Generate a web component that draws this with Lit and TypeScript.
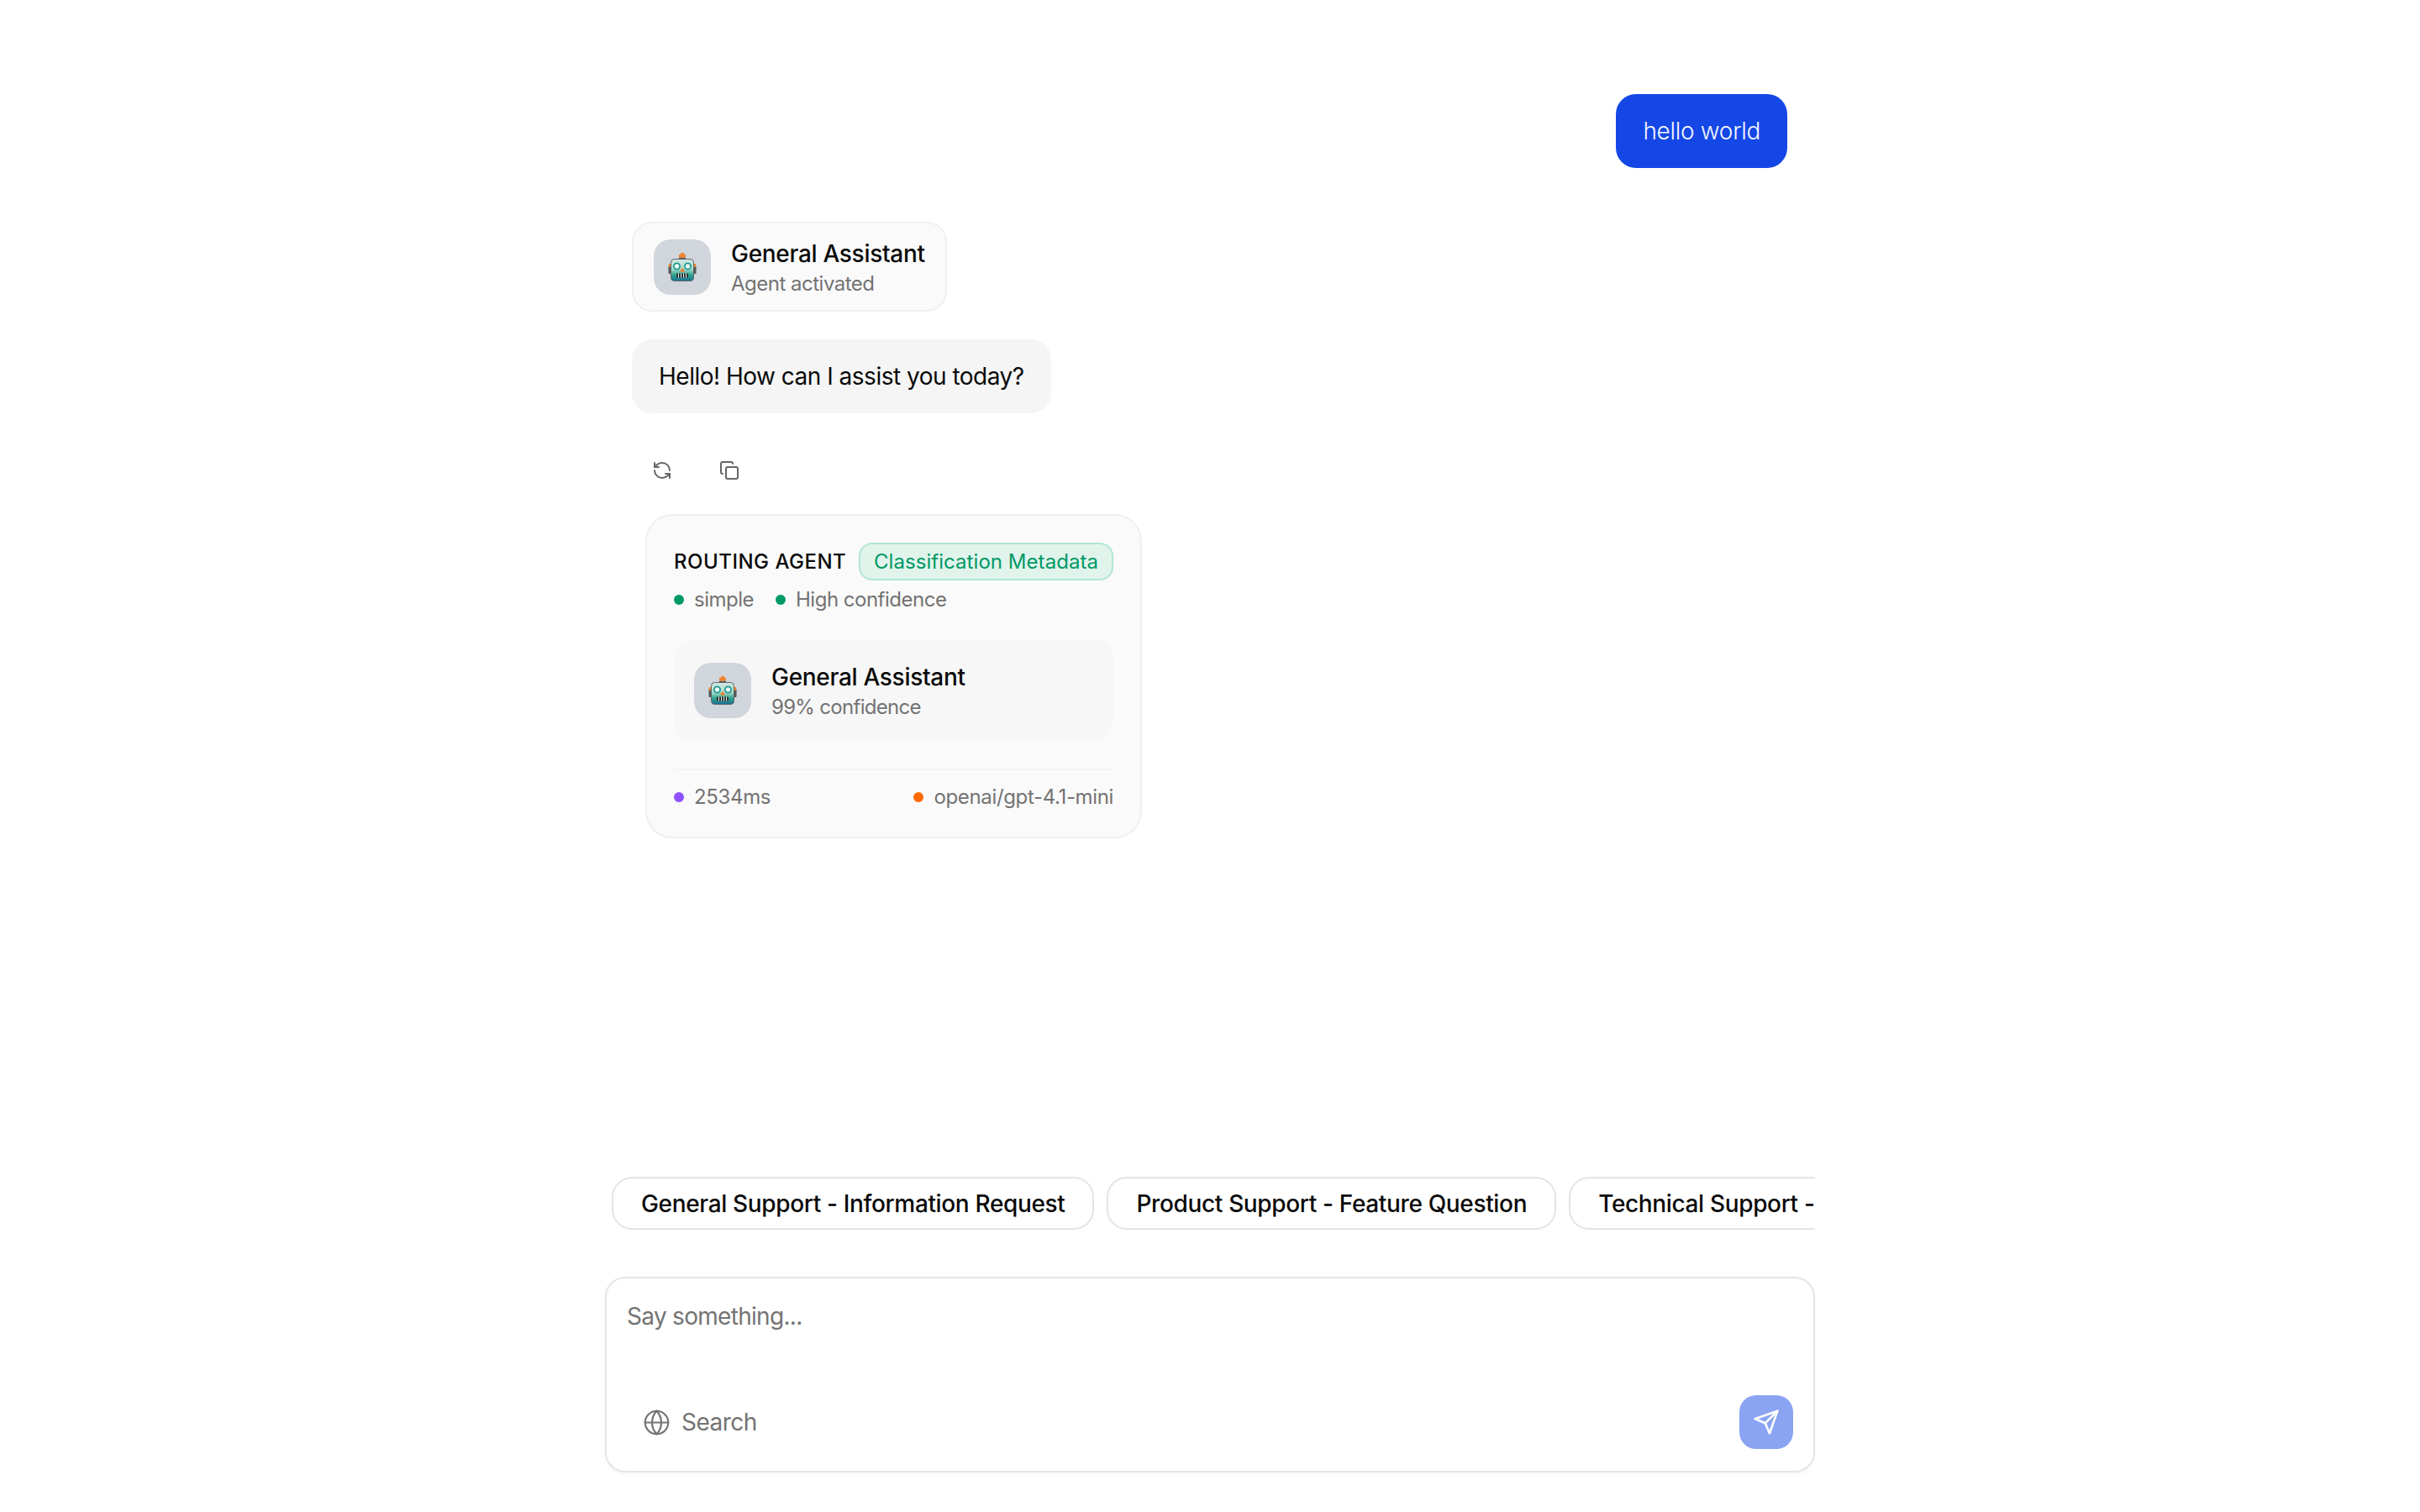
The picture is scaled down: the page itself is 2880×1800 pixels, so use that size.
import { LitElement, html, css, svg } from "lit";
import { customElement } from "lit/decorators.js";

const robot = (id: string) => html`<svg class="robot" viewBox="0 0 34 34" width="34" height="34">
  <defs><linearGradient id=${id} x1="0" y1="0" x2="0" y2="1">
    <stop offset="0" stop-color="#d4e8e2"/><stop offset=".45" stop-color="#a9dccd"/><stop offset=".72" stop-color="#2fa58c"/><stop offset="1" stop-color="#1a6f95"/>
  </linearGradient></defs>
  <rect x="0.5" y="15" width="4" height="10" rx="1" fill="#54585a"/><rect x="29.5" y="15" width="4" height="10" rx="1" fill="#54585a"/>
  <rect x="1" y="13" width="3" height="4" fill="#f2842c"/><rect x="30" y="13" width="3" height="4" fill="#f2842c"/>
  <path d="M13 5.5h8v2.5h-8z" fill="#54585a"/>
  <path d="M15 0h4v2h2v3.5h-8V2h2z" fill="#f2842c"/>
  <rect x="3.5" y="7.5" width="27" height="26" rx="4" fill="url(#${id})" stroke="#5f6668" stroke-width="1"/>
  <circle cx="10.5" cy="16" r="3.6" fill="#eef8f5" stroke="#1e9a90" stroke-width="1.8"/>
  <circle cx="23.5" cy="16" r="3.6" fill="#eef8f5" stroke="#1e9a90" stroke-width="1.8"/>
  <path d="M17 17.5l3 5h-6z" fill="#ee7b2a"/>
  <rect x="10" y="24.5" width="14" height="5" rx="1" fill="#2b3133"/>
  <path d="M12.5 24.5v5M15.5 24.5v5M18.5 24.5v5M21.5 24.5v5" stroke="#e8eeee" stroke-width="1"/>
</svg>`;

const icon = (cls: string, body: unknown) => html`<svg class=${cls} viewBox="0 0 24 24" fill="none" stroke="currentColor" stroke-width="2" stroke-linecap="round" stroke-linejoin="round">${body}</svg>`;

const refresh = svg`<path d="M21 12a9 9 0 0 0-9-9 9.75 9.75 0 0 0-6.74 2.74L3 8"/><path d="M3 3v5h5"/><path d="M3 12a9 9 0 0 0 9 9 9.75 9.75 0 0 0 6.74-2.74L21 16"/><path d="M16 16h5v5"/>`;
const copy = svg`<rect x="8" y="8" width="14" height="14" rx="2"/><path d="M4 16c-1.1 0-2-.9-2-2V4c0-1.1.9-2 2-2h10c1.1 0 2 .9 2 2"/>`;
const globe = svg`<circle cx="12" cy="12" r="10"/><path d="M12 2a14.5 14.5 0 0 0 0 20 14.5 14.5 0 0 0 0-20"/><path d="M2 12h20"/>`;
const send = svg`<path d="m22 2-7 20-4-9-9-4Z"/><path d="M22 2 11 13"/>`;

@customElement("app-root")
export class AppRoot extends LitElement {
  static styles = css`
    :host {
      display: block;
      height: 1800px;
      overflow: hidden;
      background: #fff;
      color: #0a0a0a;
      font-family: Inter, "Liberation Sans", sans-serif;
      letter-spacing: -0.5px;
    }
    .page { width: 1440px; height: 1800px; margin: 0 auto; display: flex; flex-direction: column; }
    .messages { flex: 1; min-height: 0; padding: 112px 33px 0 32px; display: flex; flex-direction: column; align-items: flex-start; }
    .user {
      align-self: flex-end; height: 88px; padding: 0 32px; display: flex; align-items: center;
      background: #1447e6; color: #f4f6fe; border-radius: 24px; font-size: 28px; font-weight: 300; margin-bottom: 64px; letter-spacing: -0.3px;
    }
    .agent {
      display: flex; align-items: center; gap: 24px; height: 107px; box-sizing: border-box; padding: 0 24px;
      background: #fafafa; border: 2px solid #f0f0f0; border-radius: 24px; margin-bottom: 33px;
    }
    .tile { width: 68px; height: 66px; background: #d1d5dc; border-radius: 20px; display: flex; align-items: center; justify-content: center; flex: none; }
    .names { display: flex; flex-direction: column; gap: 4px; padding-top: 2px; }
    .name { font-size: 28px; line-height: 34px; font-weight: 500; letter-spacing: -0.3px; }
    .sub { font-size: 24px; line-height: 30px; color: #737373; letter-spacing: -0.5px; }
    .reply { height: 88px; padding: 0 32px; display: flex; align-items: center; background: #f5f5f5; border-radius: 24px; font-size: 28px; }
    .actions { display: flex; align-items: center; gap: 56px; height: 24px; margin: 56px 0 40px 24px; color: #666; }
    .act { width: 24px; height: 24px; }
    .card {
      margin-left: 16px; width: 591px; height: 386px; box-sizing: border-box; padding: 32px;
      background: #fafafa; border: 2px solid #f0f0f0; border-radius: 32px; display: flex; flex-direction: column;
    }
    .head { display: flex; align-items: center; justify-content: space-between; height: 45px; }
    .label { font-size: 24px; font-weight: 500; letter-spacing: 0.5px; }
    .badge {
      height: 45px; box-sizing: border-box; padding: 0 16px; display: flex; align-items: center; border-radius: 16px;
      background: #e1f4ec; border: 2px solid #b0e6d2; color: #009966; font-size: 24px; font-weight: 400; letter-spacing: 0.05px;
    }
    .meta { display: flex; align-items: center; gap: 26px; height: 30px; margin-top: 8px; color: #737373; font-size: 24px; letter-spacing: -0.5px; }
    .meta span, .foot span { display: flex; align-items: center; gap: 12px; }
    .dot { width: 12px; height: 12px; border-radius: 50%; flex: none; }
    .green { background: #009966; } .purple { background: #8e51ff; } .orange { background: #ff6900; }
    .inner { margin-top: 33px; height: 121px; background: #f7f7f7; border-radius: 24px; display: flex; align-items: center; gap: 24px; padding: 0 24px; flex: none; }
    .inner .sub { letter-spacing: -0.7px; }
    .foot { margin-top: 33px; border-top: 2px solid #f2f2f2; padding-top: 17px; display: flex; justify-content: space-between; color: #737373; font-size: 24px; line-height: 30px; letter-spacing: -0.35px; }
    .chips { display: flex; gap: 15px; padding-left: 8px; height: 63px; overflow: hidden; flex: none; margin-bottom: 56px; }
    .chip {
      flex: none; box-sizing: border-box; height: 63px; padding: 0 33px; display: flex; align-items: center; letter-spacing: -0.35px;
      background: #fff; border: 2px solid #e5e5e5; border-radius: 24px; font-size: 28px; font-weight: 500; white-space: nowrap;
    }
    .input {
      flex: none; height: 233px; margin-bottom: 47px; box-sizing: border-box; padding: 24px 24px 26px 24px;
      border: 2px solid #e5e5e5; border-radius: 24px; box-shadow: 0 2px 4px rgba(0,0,0,.04);
      display: flex; flex-direction: column; justify-content: space-between;
    }
    .ph { font-size: 28px; line-height: 34px; color: #737373; letter-spacing: -0.7px; margin-top: 4px; }
    .tools { display: flex; align-items: center; justify-content: space-between; padding-left: 19px; }
    .search { display: flex; align-items: center; gap: 13px; font-size: 28px; color: #737373; }
    .globe { width: 33px; height: 33px; stroke-width: 1.6; }
    .send { width: 64px; height: 64px; border-radius: 20px; background: #8aa3f3; color: #fff; display: flex; align-items: center; justify-content: center; }
    .plane { width: 32px; height: 32px; }
  `;

  render() {
    return html`<div class="page">
      <div class="messages">
        <div class="user">hello world</div>
        <div class="agent">
          <div class="tile">${robot("g1")}</div>
          <div class="names"><div class="name">General Assistant</div><div class="sub">Agent activated</div></div>
        </div>
        <div class="reply">Hello! How can I assist you today?</div>
        <div class="actions">${icon("act", refresh)}${icon("act", copy)}</div>
        <div class="card">
          <div class="head"><div class="label">ROUTING AGENT</div><div class="badge">Classification Metadata</div></div>
          <div class="meta"><span><i class="dot green"></i>simple</span><span><i class="dot green"></i>High confidence</span></div>
          <div class="inner">
            <div class="tile">${robot("g2")}</div>
            <div class="names"><div class="name">General Assistant</div><div class="sub">99% confidence</div></div>
          </div>
          <div class="foot"><span><i class="dot purple"></i>2534ms</span><span><i class="dot orange"></i>openai/gpt-4.1-mini</span></div>
        </div>
      </div>
      <div class="chips">
        <div class="chip">General Support - Information Request</div>
        <div class="chip">Product Support - Feature Question</div>
        <div class="chip">Technical Support - Troubleshooting</div>
      </div>
      <div class="input">
        <div class="ph">Say something...</div>
        <div class="tools">
          <div class="search">${icon("globe", globe)}Search</div>
          <div class="send">${icon("plane", send)}</div>
        </div>
      </div>
    </div>`;
  }
}
